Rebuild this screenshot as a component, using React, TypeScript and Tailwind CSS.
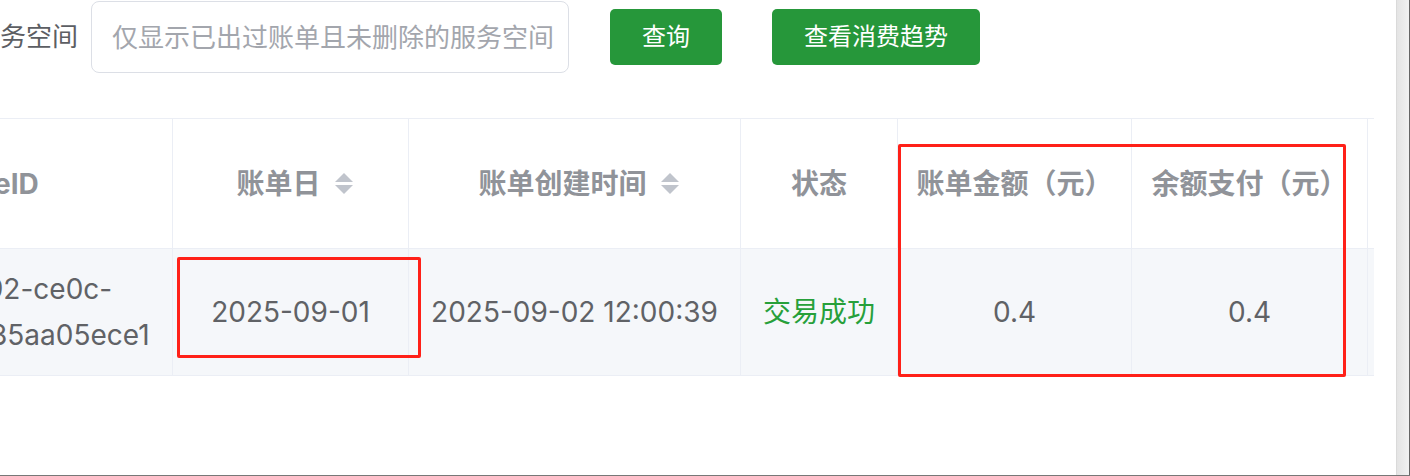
const FONT = "font-['Inter','Noto_Sans_CJK_SC',sans-serif]";

const SortCaret = () => (
  <svg width="18" height="23" viewBox="0 0 18 23" className="ml-[14px] mr-[-8px] shrink-0">
    <polygon points="0,10 9,1 18,10" fill="#c0c4cc" />
    <polygon points="0,13 18,13 9,22" fill="#c0c4cc" />
  </svg>
);

export default function App() {
  return (
    <div className={`${FONT} relative w-[1410px] h-[476px] bg-white overflow-hidden flex border-b border-[#777]`}>
      <div className="flex-1 flex flex-col">
        {/* search form */}
        <div className="flex items-center h-[73px] pt-[1px]">
          <span className="leading-[30px] text-[26px] text-[#5c5e63] whitespace-nowrap">务空间</span>
          <div className="ml-[13px] h-[72px] w-[478px] rounded-[8px] border border-[#dcdfe6] flex items-center pl-[20px]">
            <span className="text-[26px] text-[#a3a6ad] whitespace-nowrap">仅显示已出过账单且未删除的服务空间</span>
          </div>
          <button className="ml-[41px] h-[56px] w-[112px] rounded-[5px] bg-[#26973a] text-white text-[24px] flex items-center justify-center">
            查询
          </button>
          <button className="ml-[50px] h-[56px] w-[208px] rounded-[5px] bg-[#26973a] text-white text-[24px] flex items-center justify-center">
            查看消费趋势
          </button>
        </div>

        {/* table */}
        <div className="mt-[45px] w-[1374px] overflow-hidden border-t border-[#ebeef5]">
          <div className="flex h-[130px] border-b border-[#ebeef5] text-[28px] font-bold text-[#909399]">
            <div className="w-[173px] border-r border-[#ebeef5] flex items-center overflow-hidden">
              <span className="ml-[-6px] whitespace-nowrap">eID</span>
            </div>
            <div className="w-[236px] border-r border-[#ebeef5] flex items-center justify-center">
              <span className="whitespace-nowrap">账单日</span>
              <SortCaret />
            </div>
            <div className="w-[332px] border-r border-[#ebeef5] flex items-center justify-center">
              <span className="whitespace-nowrap">账单创建时间</span>
              <SortCaret />
            </div>
            <div className="w-[157px] border-r border-[#ebeef5] flex items-center justify-center">
              <span className="whitespace-nowrap">状态</span>
            </div>
            <div className="w-[234px] border-r border-[#ebeef5] flex items-center justify-center">
              <span className="whitespace-nowrap">账单金额（元）</span>
            </div>
            <div className="w-[236px] border-r border-[#ebeef5] flex items-center justify-center">
              <span className="whitespace-nowrap">余额支付（元）</span>
            </div>
            <div className="w-[6px]" />
          </div>
          <div className="flex h-[127px] border-b border-[#ebeef5] bg-[#f5f7fa] text-[28px] text-[#606266]">
            <div className="w-[173px] border-r border-[#ebeef5] flex flex-col justify-center overflow-hidden leading-[46px]">
              <span className="ml-[-14px] whitespace-nowrap">92-ce0c-</span>
              <span className="ml-[-10px] whitespace-nowrap">35aa05ece1</span>
            </div>
            <div className="w-[236px] border-r border-[#ebeef5] flex items-center justify-center">
              2025-09-01
            </div>
            <div className="w-[332px] border-r border-[#ebeef5] flex items-center justify-center whitespace-nowrap">
              2025-09-02 12:00:39
            </div>
            <div className="w-[157px] border-r border-[#ebeef5] flex items-center justify-center text-[#27a03a]">
              交易成功
            </div>
            <div className="w-[234px] border-r border-[#ebeef5] flex items-center justify-center">0.4</div>
            <div className="w-[236px] border-r border-[#ebeef5] flex items-center justify-center">0.4</div>
            <div className="w-[6px]" />
          </div>
        </div>
      </div>

      {/* scrollbar track */}
      <div className="w-[14px] bg-gradient-to-r from-[#e4e4e4] to-[#f2f2f2] border-l border-[#dadada] border-r border-r-[#666]" />

      {/* annotation boxes */}
      <div className="absolute left-[177px] top-[257px] w-[244px] h-[101px] border-[3px] border-[#ff2018] rounded-[2px]" />
      <div className="absolute left-[898px] top-[144px] w-[448px] h-[233px] border-[3px] border-[#ff2018] rounded-[2px]" />
    </div>
  );
}
